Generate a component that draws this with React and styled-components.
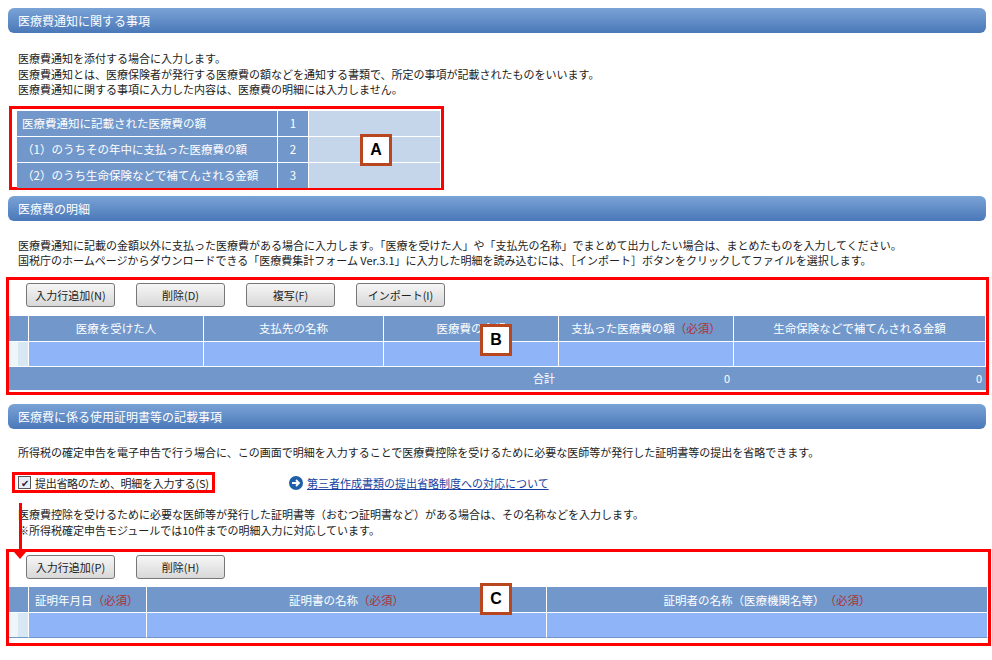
import React from "react";
import styled, { createGlobalStyle } from "styled-components";

const G = createGlobalStyle`
  body{margin:0;background:#fff;font-family:"Noto Sans CJK JP","Noto Sans",sans-serif;font-size:11px;color:#222;}
`;
const Page = styled.div`width:992px;height:660px;position:relative;overflow:hidden;`;
const Head = styled.div`
  margin:${p=>p.$mt}px 6px 0 8px;height:25px;border-radius:6px;
  background:linear-gradient(#7aa3d6,#4a78b8);color:#fff;font-size:12px;
  display:flex;align-items:center;padding-left:10px;
`;
const Text = styled.div`margin:${p=>p.$mt||0}px 0 0 18px;line-height:15.5px;font-size:11px;white-space:nowrap;`;
const Red = styled.div`
  position:relative;border:3px solid #f00;box-sizing:border-box;
  margin:${p=>p.$m};width:${p=>p.$w}px;height:${p=>p.$h}px;padding:${p=>p.$p};
`;
const TA = styled.div`display:grid;grid-template-columns:260px 30px 131px;grid-auto-rows:25px;gap:1px;background:#fff;`;
const TH = styled.div`background:#7298cb;color:#fff;display:flex;align-items:center;padding-left:${p=>p.$pl||0}px;justify-content:${p=>p.$c?"center":"flex-start"};font-size:11.5px;`;
const TD = styled.div`background:#c5d5ea;`;
const Btns = styled.div`display:flex;gap:21px;padding-left:17px;margin-top:3px;`;
const Btn = styled.div`
  width:87px;height:22px;border:1px solid #777;border-radius:3px;
  background:linear-gradient(#f6f6f6,#d8d8d8);display:flex;align-items:center;justify-content:center;font-size:11px;
`;
const Grid = styled.div`display:grid;grid-template-columns:${p=>p.$cols};gap:0;margin-top:${p=>p.$mt}px;`;
const GH = styled.div`background:#7298cb;color:#fff;height:25px;display:flex;align-items:center;justify-content:${p=>p.$l?"flex-start":"center"};padding-left:${p=>p.$l?6:0}px;border-right:1px solid #fff;border-bottom:1px solid #fff;font-size:11.5px;white-space:nowrap;`;
const GC = styled.div`background:${p=>p.$stub?"linear-gradient(90deg,#eef6fa 50%,#d8e8f2 50%)":"#8fb4f8"};height:24px;border-right:1px solid #fff;border-bottom:1px solid ${p=>p.$bb||"#fff"};`;
const Req = styled.span`color:#a33;`;
const Total = styled.div`grid-column:1/-1;display:grid;grid-template-columns:550px 175px 252px;background:#7298cb;color:#fff;height:23px;align-items:center;`;
const R = styled.div`text-align:right;padding-right:4px;`;
const Tag = styled.div`
  position:absolute;left:${p=>p.$x}px;top:${p=>p.$y}px;width:26px;height:26px;border:3px solid #b8461e;background:#fff;
  display:flex;align-items:center;justify-content:center;font:bold 16px "Liberation Sans",sans-serif;color:#000;
`;
const CheckRow = styled.div`display:flex;align-items:center;margin:12px 0 0 12px;gap:74px;`;
const CheckBox = styled.div`border:3px solid #f00;width:203px;height:21px;box-sizing:border-box;display:flex;align-items:center;gap:4px;padding-left:3px;white-space:nowrap;font-size:11px;letter-spacing:-0.3px;`;
const Cb = styled.div`width:11px;height:11px;flex:none;border:1px solid #555;background:#e8eef8;font-size:10px;line-height:11px;text-align:center;color:#224;`;
const Link = styled.a`color:#1a3fa0;text-decoration:underline;display:flex;align-items:center;gap:4px;font-size:11px;`;
const Arrow = styled.div`position:absolute;left:19px;top:503px;width:3px;height:50px;background:#f00;
  &:after{content:"";position:absolute;left:-5px;bottom:-6px;border:6px solid transparent;border-top:7px solid #f00;border-bottom:0;}`;

export default function App(){
  return <Page><G/>
    <Head $mt={8}>医療費通知に関する事項</Head>
    <Text $mt={18}>医療費通知を添付する場合に入力します。</Text>
    <Text>医療費通知とは、医療保険者が発行する医療費の額などを通知する書類で、所定の事項が記載されたものをいいます。</Text>
    <Text>医療費通知に関する事項に入力した内容は、医療費の明細には入力しません。</Text>
    <Red $m="8px 0 0 9px" $w={435} $h={84} $p="2px 0 0 5px">
      <TA>
        <TH $pl={5}>医療費通知に記載された医療費の額</TH><TH $c>1</TH><TD/>
        <TH $pl={5}>（1）のうちその年中に支払った医療費の額</TH><TH $c>2</TH><TD/>
        <TH $pl={5}>（2）のうち生命保険などで補てんされる金額</TH><TH $c>3</TH><TD/>
      </TA>
      <Tag $x={348} $y={25}>A</Tag>
    </Red>
    <Head $mt={6}>医療費の明細</Head>
    <Text $mt={17}>医療費通知に記載の金額以外に支払った医療費がある場合に入力します。「医療を受けた人」や「支払先の名称」でまとめて出力したい場合は、まとめたものを入力してください。</Text>
    <Text>国税庁のホームページからダウンロードできる「医療費集計フォーム Ver.3.1」に入力した明細を読み込むには、［インポート］ボタンをクリックしてファイルを選択します。</Text>
    <Red $m="8px 0 0 6px" $w={983} $h={118} $p="0">
      <Btns><Btn>入力行追加(N)</Btn><Btn>削除(D)</Btn><Btn>複写(F)</Btn><Btn>インポート(I)</Btn></Btns>
      <Grid $cols="20px 175px 180px 175px 175px 252px" $mt={9}>
        <GH/><GH>医療を受けた人</GH><GH>支払先の名称</GH><GH>医療費の金額</GH><GH>支払った医療費の額<Req>（必須）</Req></GH><GH>生命保険などで補てんされる金額</GH>
        <GC $stub/><GC/><GC/><GC/><GC/><GC/>
        <Total><R>合計</R><R>0</R><R>0</R></Total>
      </Grid>
      <Tag $x={471} $y={44}>B</Tag>
    </Red>
    <Head $mt={9}>医療費に係る使用証明書等の記載事項</Head>
    <Text $mt={16}>所得税の確定申告を電子申告で行う場合に、この画面で明細を入力することで医療費控除を受けるために必要な医師等が発行した証明書等の提出を省略できます。</Text>
    <CheckRow>
      <CheckBox><Cb>✔</Cb>提出省略のため、明細を入力する(S)</CheckBox>
      <Link><svg width="14" height="14" viewBox="0 0 14 14"><circle cx="7" cy="7" r="7" fill="#1d5fa8"/><path d="M3 7h7M7 4l3 3-3 3" stroke="#fff" strokeWidth="1.8" fill="none"/></svg>第三者作成書類の提出省略制度への対応について</Link>
    </CheckRow>
    <Text $mt={14}>医療費控除を受けるために必要な医師等が発行した証明書等（おむつ証明書など）がある場合は、その名称などを入力します。</Text>
    <Text>※所得税確定申告モジュールでは10件までの明細入力に対応しています。</Text>
    <Arrow/>
    <Red $m="11px 0 0 6px" $w={985} $h={97} $p="0">
      <Btns><Btn>入力行追加(P)</Btn><Btn>削除(H)</Btn></Btns>
      <Grid $cols="20px 118px 400px 441px" $mt={8}>
        <GH/><GH $l>証明年月日<Req>（必須）</Req></GH><GH>証明書の名称<Req>（必須）</Req></GH><GH>証明者の名称（医療機関名等）<Req>（必須）</Req></GH>
        <GC $stub $bb="#7298cb"/><GC $bb="#7298cb"/><GC $bb="#7298cb"/><GC $bb="#7298cb"/>
      </Grid>
      <Tag $x={471} $y={31}>C</Tag>
    </Red>
  </Page>;
}
